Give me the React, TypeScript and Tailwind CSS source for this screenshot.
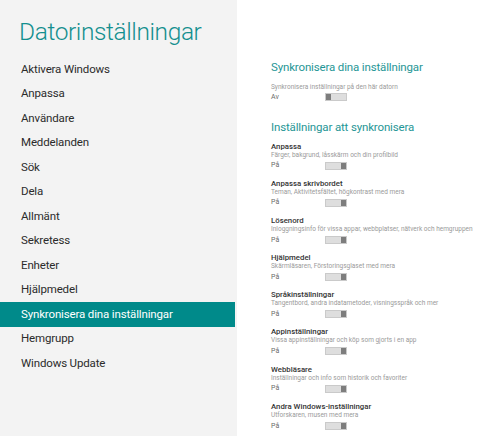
const navItems = [
  "Aktivera Windows",
  "Anpassa",
  "Användare",
  "Meddelanden",
  "Sök",
  "Dela",
  "Allmänt",
  "Sekretess",
  "Enheter",
  "Hjälpmedel",
  "Synkronisera dina inställningar",
  "Hemgrupp",
  "Windows Update",
];

const syncItems = [
  { title: "Anpassa", desc: "Färger, bakgrund, låsskärm och din profilbild" },
  { title: "Anpassa skrivbordet", desc: "Teman, Aktivitetsfältet, högkontrast med mera" },
  { title: "Lösenord", desc: "Inloggningsinfo för vissa appar, webbplatser, nätverk och hemgruppen" },
  { title: "Hjälpmedel", desc: "Skärmläsaren, Förstoringsglaset med mera" },
  { title: "Språkinställningar", desc: "Tangentbord, andra indatametoder, visningsspråk och mer" },
  { title: "Appinställningar", desc: "Vissa appinställningar och köp som gjorts i en app" },
  { title: "Webbläsare", desc: "Inställningar och info som historik och favoriter" },
  { title: "Andra Windows-inställningar", desc: "Utforskaren, musen med mera" },
];

const Toggle = ({ on }: { on: boolean }) => (
  <div
    className={`flex h-[8px] w-[22px] border border-[#cacaca] bg-[#dedede] ${
      on ? "justify-end" : "justify-start"
    }`}
  >
    <div className="h-full w-[5px] bg-[#7d7d7d]" />
  </div>
);

export default function App() {
  return (
    <div
      className="flex h-[436px] w-[480px] overflow-hidden bg-white"
      style={{ fontFamily: 'Roboto, "Open Sans", sans-serif' }}
    >
      {/* left: navigation */}
      <div className="flex w-[237px] shrink-0 flex-col bg-[#f3f3f3]">
        <h1 className="ml-[19px] mt-[15px] text-[24.5px] font-light leading-[34px] tracking-[-0.4px] text-[#138f8f]">
          Datorinställningar
        </h1>
        <div className="mt-[8px] flex flex-col">
          {navItems.map((label) => {
            const active = label === "Synkronisera dina inställningar";
            return (
              <div
                key={label}
                className={`flex h-[24.5px] items-center pl-[21px] text-[11.5px] tracking-[-0.15px] ${
                  active ? "w-[235px] bg-[#008a8a] text-white" : "text-[#2b2b2b]"
                }`}
              >
                {label}
              </div>
            );
          })}
        </div>
      </div>

      {/* right: sync settings */}
      <div className="flex flex-1 flex-col whitespace-nowrap pl-[34px]">
        <h2 className="mt-[58px] text-[11.5px] leading-[18px] tracking-[-0.15px] text-[#1f9696]">
          Synkronisera dina inställningar
        </h2>
        <div className="mt-[7px] text-[6.5px] leading-[9px] text-[#9a9a9a]">
          Synkronisera inställningar på den här datorn
        </div>
        <div className="flex h-[12px] items-center">
          <span className="w-[54px] text-[7px] text-[#6b6b6b]">Av</span>
          <Toggle on={false} />
        </div>

        <h2 className="mt-[15px] text-[11.5px] leading-[18px] tracking-[-0.15px] text-[#1f9696]">
          Inställningar att synkronisera
        </h2>
        <div className="mt-[6px] flex flex-col">
          {syncItems.map((item) => (
            <div key={item.title} className="flex h-[37.2px] flex-col">
              <div className="text-[7.8px] font-medium leading-[9px] text-[#333]">
                {item.title}
              </div>
              <div className="text-[6.5px] leading-[9px] text-[#9a9a9a]">{item.desc}</div>
              <div className="flex h-[12px] items-center">
                <span className="w-[54px] text-[7px] text-[#6b6b6b]">På</span>
                <Toggle on />
              </div>
            </div>
          ))}
        </div>
      </div>
    </div>
  );
}
